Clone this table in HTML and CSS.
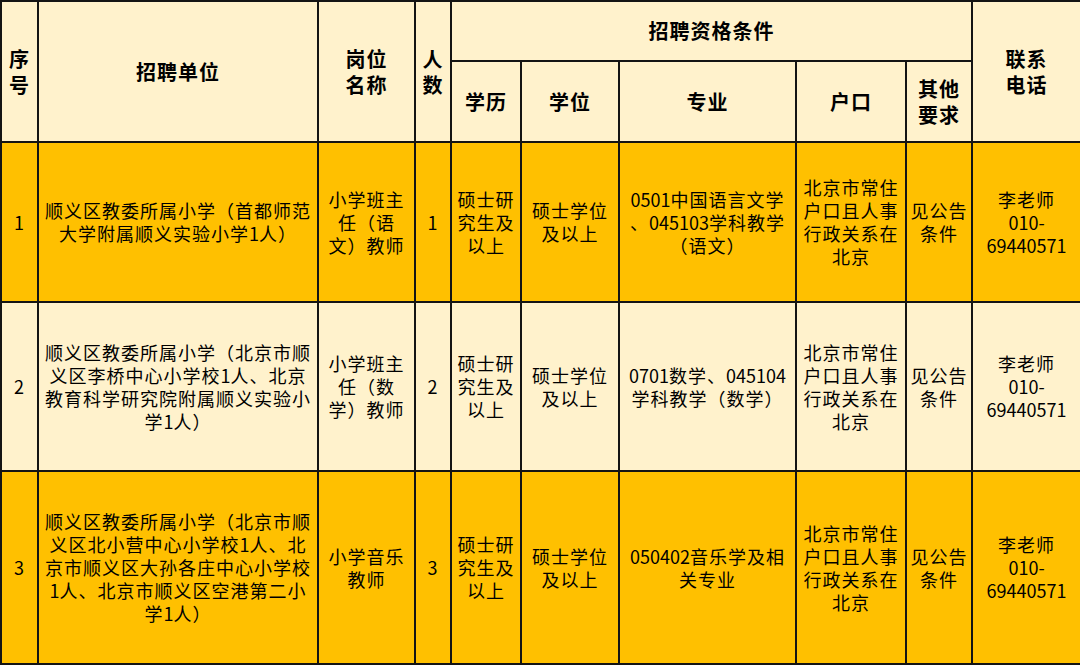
FILE: index.html
```html
<!DOCTYPE html>
<html lang="zh-CN">
<head>
<meta charset="utf-8">
<title>招聘</title>
<link rel="stylesheet" href="styles.css">
</head>
<body>
<table class="grid">
  <colgroup>
    <col class="c1"><col class="c2"><col class="c3"><col class="c4"><col class="c5">
    <col class="c6"><col class="c7"><col class="c8"><col class="c9"><col class="c10">
  </colgroup>
  <thead>
    <tr class="h1">
      <th rowspan="2">序<br>号</th>
      <th rowspan="2">招聘单位</th>
      <th rowspan="2">岗位<br>名称</th>
      <th rowspan="2">人<br>数</th>
      <th colspan="5">招聘资格条件</th>
      <th rowspan="2">联系<br>电话</th>
    </tr>
    <tr class="h2">
      <th>学历</th>
      <th>学位</th>
      <th>专业</th>
      <th>户口</th>
      <th>其他<br>要求</th>
    </tr>
  </thead>
  <tbody>
    <tr class="r1 orange">
      <td>1</td>
      <td>顺义区教委所属小学（首都师范<br>大学附属顺义实验小学<span class="n">1</span>人）</td>
      <td>小学班主<br>任（语<br>文）教师</td>
      <td>1</td>
      <td>硕士研<br>究生及<br>以上</td>
      <td>硕士学位<br>及以上</td>
      <td><span class="n">0501</span>中国语言文学<br>、<span class="n">045103</span>学科教学<br>（语文）</td>
      <td>北京市常住<br>户口且人事<br>行政关系在<br>北京</td>
      <td>见公告<br>条件</td>
      <td>李老师<br><span class="n">010-</span><br><span class="n">69440571</span></td>
    </tr>
    <tr class="r2 light">
      <td>2</td>
      <td>顺义区教委所属小学（北京市顺<br>义区李桥中心小学校<span class="n">1</span>人、北京<br>教育科学研究院附属顺义实验小<br>学<span class="n">1</span>人）</td>
      <td>小学班主<br>任（数<br>学）教师</td>
      <td>2</td>
      <td>硕士研<br>究生及<br>以上</td>
      <td>硕士学位<br>及以上</td>
      <td><span class="n">0701</span>数学、<span class="n">045104</span><br>学科教学（数学）</td>
      <td>北京市常住<br>户口且人事<br>行政关系在<br>北京</td>
      <td>见公告<br>条件</td>
      <td>李老师<br><span class="n">010-</span><br><span class="n">69440571</span></td>
    </tr>
    <tr class="r3 orange">
      <td>3</td>
      <td>顺义区教委所属小学（北京市顺<br>义区北小营中心小学校<span class="n">1</span>人、北<br>京市顺义区大孙各庄中心小学校<br><span class="n">1</span>人、北京市顺义区空港第二小<br>学<span class="n">1</span>人）</td>
      <td>小学音乐<br>教师</td>
      <td>3</td>
      <td>硕士研<br>究生及<br>以上</td>
      <td>硕士学位<br>及以上</td>
      <td><span class="n">050402</span>音乐学及相<br>关专业</td>
      <td>北京市常住<br>户口且人事<br>行政关系在<br>北京</td>
      <td>见公告<br>条件</td>
      <td>李老师<br><span class="n">010-</span><br><span class="n">69440571</span></td>
    </tr>
  </tbody>
</table>
</body>
</html>
```
FILE: styles.css
```css
html, body {
  margin: 0;
  padding: 0;
  background: #fff2cc;
  overflow: hidden;
}

.grid {
  width: 1080px;
  table-layout: fixed;
  border-collapse: collapse;
  font-family: "Noto Sans CJK SC", "Noto Sans", sans-serif;
  color: #000;
}

.c1 { width: 37px; }
.c2 { width: 280px; }
.c3 { width: 97px; }
.c4 { width: 36px; }
.c5 { width: 70px; }
.c6 { width: 98px; }
.c7 { width: 177px; }
.c8 { width: 110px; }
.c9 { width: 66px; }
.c10 { width: 109px; }

.grid th,
.grid td {
  border: 2px solid #141414;
  padding: 0 2px;
  text-align: center;
  vertical-align: middle;
  overflow: hidden;
  white-space: nowrap;
}

.grid th {
  background: #fff2cc;
  font-size: 20px;
  font-weight: 700;
  line-height: 26px;
  letter-spacing: 1px;
}

.grid td {
  font-size: 18px;
  font-weight: 400;
  line-height: 23px;
  letter-spacing: 1px;
}

.h1 { height: 60px; }
.h2 { height: 81px; }
.r1 { height: 160px; }
.r2 { height: 169px; }
.r3 { height: 193px; }

.orange td { background: #ffc000; }
.light td { background: #fff2cc; }

.n {
  letter-spacing: 0;
}
```
